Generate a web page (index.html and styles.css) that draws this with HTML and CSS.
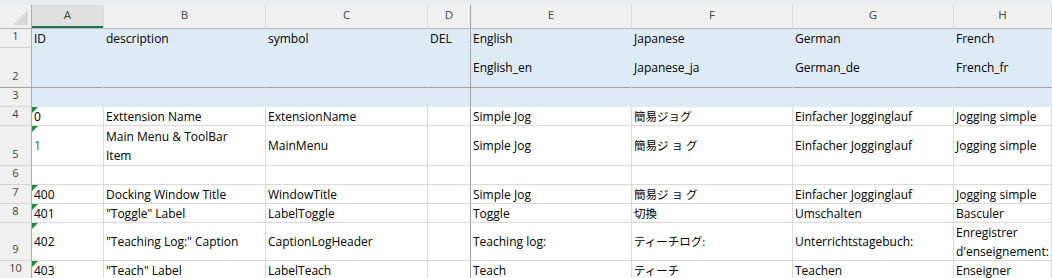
FILE: index.html
```html
<!DOCTYPE html>
<html lang="ja">
<head>
    <meta charset="UTF-8">
    <title>Localization sheet</title>
    <link rel="stylesheet" href="styles.css">
</head>
<body>
    <div class="topbar"></div>
    <div class="sheet">
        <!-- column headers -->
        <div class="corner"></div>
        <div class="colhead selected">A</div>
        <div class="colhead">B</div>
        <div class="colhead">C</div>
        <div class="colhead frz-v">D</div>
        <div class="colhead">E</div>
        <div class="colhead">F</div>
        <div class="colhead">G</div>
        <div class="colhead">H</div>

        <!-- row 1 -->
        <div class="rowhead">1</div>
        <div class="cell fill">ID</div>
        <div class="cell fill">description</div>
        <div class="cell fill">symbol</div>
        <div class="cell fill frz-v">DEL</div>
        <div class="cell fill">English</div>
        <div class="cell fill">Japanese</div>
        <div class="cell fill">German</div>
        <div class="cell fill">French</div>

        <!-- row 2 -->
        <div class="rowhead frz-h">2</div>
        <div class="cell fill frz-h"></div>
        <div class="cell fill frz-h"></div>
        <div class="cell fill frz-h"></div>
        <div class="cell fill frz-h frz-v"></div>
        <div class="cell fill frz-h">English_en</div>
        <div class="cell fill frz-h">Japanese_ja</div>
        <div class="cell fill frz-h">German_de</div>
        <div class="cell fill frz-h">French_fr</div>

        <!-- row 3 -->
        <div class="rowhead">3</div>
        <div class="cell fill"></div>
        <div class="cell fill"></div>
        <div class="cell fill"></div>
        <div class="cell fill frz-v"></div>
        <div class="cell fill"></div>
        <div class="cell fill"></div>
        <div class="cell fill"></div>
        <div class="cell fill"></div>

        <!-- row 4 -->
        <div class="rowhead">4</div>
        <div class="cell err">0</div>
        <div class="cell">Exttension Name</div>
        <div class="cell">ExtensionName</div>
        <div class="cell frz-v"></div>
        <div class="cell">Simple Jog</div>
        <div class="cell jp">簡易ジョグ</div>
        <div class="cell">Einfacher Jogginglauf</div>
        <div class="cell">Jogging simple</div>

        <!-- row 5 -->
        <div class="rowhead">5</div>
        <div class="cell err link">1</div>
        <div class="cell">Main Menu &amp; ToolBar<br>Item</div>
        <div class="cell">MainMenu</div>
        <div class="cell frz-v"></div>
        <div class="cell">Simple Jog</div>
        <div class="cell jp">簡易<span class="kana-wide">ジョグ</span></div>
        <div class="cell">Einfacher Jogginglauf</div>
        <div class="cell">Jogging simple</div>

        <!-- row 6 -->
        <div class="rowhead">6</div>
        <div class="cell"></div>
        <div class="cell"></div>
        <div class="cell"></div>
        <div class="cell frz-v"></div>
        <div class="cell"></div>
        <div class="cell"></div>
        <div class="cell"></div>
        <div class="cell"></div>

        <!-- row 7 -->
        <div class="rowhead">7</div>
        <div class="cell err">400</div>
        <div class="cell">Docking Window Title</div>
        <div class="cell">WindowTitle</div>
        <div class="cell frz-v"></div>
        <div class="cell">Simple Jog</div>
        <div class="cell jp">簡易<span class="kana-wide">ジョグ</span></div>
        <div class="cell">Einfacher Jogginglauf</div>
        <div class="cell">Jogging simple</div>

        <!-- row 8 -->
        <div class="rowhead">8</div>
        <div class="cell err">401</div>
        <div class="cell">"Toggle" Label</div>
        <div class="cell">LabelToggle</div>
        <div class="cell frz-v"></div>
        <div class="cell">Toggle</div>
        <div class="cell jp">切換</div>
        <div class="cell">Umschalten</div>
        <div class="cell">Basculer</div>

        <!-- row 9 -->
        <div class="rowhead">9</div>
        <div class="cell err">402</div>
        <div class="cell">"Teaching Log:" Caption</div>
        <div class="cell">CaptionLogHeader</div>
        <div class="cell frz-v"></div>
        <div class="cell">Teaching log:</div>
        <div class="cell jp">ティーチログ:</div>
        <div class="cell">Unterrichtstagebuch:</div>
        <div class="cell">Enregistrer<br>d'enseignement:</div>

        <!-- row 10 -->
        <div class="rowhead">10</div>
        <div class="cell err">403</div>
        <div class="cell">"Teach" Label</div>
        <div class="cell">LabelTeach</div>
        <div class="cell frz-v"></div>
        <div class="cell">Teach</div>
        <div class="cell jp">ティーチ</div>
        <div class="cell">Teachen</div>
        <div class="cell">Enseigner</div>
    </div>
</body>
</html>
```

FILE: styles.css
```css
body {
    margin: 0;
    background: #ffffff;
    overflow: hidden;
    font-family: "Open Sans", "Noto Sans CJK JP", sans-serif;
}

.topbar {
    height: 5px;
    background: #eaedf0;
}

.sheet {
    display: grid;
    grid-template-columns: 32px 72px 162px 162px 43px 161px 161px 161px 98px;
    grid-template-rows: 24px 19px 40px 19px 19px 40px 19px 19px 19px 38px 19px;
}

.sheet > div {
    box-sizing: border-box;
    border-right: 1px solid #dadada;
    border-bottom: 1px solid #dadada;
}

/* headers */

.corner {
    position: relative;
    background: #f0f0f0;
    border-right-color: #ababab !important;
    border-bottom-color: #b5b5b5 !important;
}

.corner::after {
    content: "";
    position: absolute;
    right: 3px;
    bottom: 3px;
    width: 0;
    height: 0;
    border-left: 15px solid transparent;
    border-bottom: 15px solid #d9d9d9;
}

.colhead {
    display: flex;
    justify-content: center;
    background: #f0f0f0;
    color: #444;
    font-size: 11.5px;
    line-height: 16px;
    padding-top: 2px;
    border-bottom-color: #b5b5b5 !important;
}

.colhead.selected {
    background: #e0e0e0;
    color: #2b4a38;
    box-shadow: inset 0 -2px 0 #217346;
}

.rowhead {
    display: flex;
    align-items: flex-end;
    justify-content: center;
    background: #f0f0f0;
    color: #444;
    font-size: 11px;
    line-height: 16px;
    padding-bottom: 3px;
    border-right-color: #ababab !important;
    border-bottom-color: #d4d4d4 !important;
}

/* cells */

.cell {
    position: relative;
    display: flex;
    align-items: center;
    padding: 0 2px;
    font-size: 12px;
    line-height: 19px;
    color: #000;
    white-space: nowrap;
    overflow: hidden;
}

.cell.fill {
    background: #ddebf7;
    border-color: #ddebf7 !important;
}

.sheet > .frz-v {
    border-right-color: #9e9e9e !important;
}

.sheet > .frz-h {
    border-bottom-color: #9e9e9e !important;
}

.jp {
    font-size: 11.5px;
}

.kana-wide {
    letter-spacing: 3px;
}

.link {
    color: #2f5597;
}

.err::before {
    content: "";
    position: absolute;
    left: 0;
    top: 0;
    width: 0;
    height: 0;
    border-top: 6px solid #1e8a3c;
    border-right: 6px solid transparent;
}
```
